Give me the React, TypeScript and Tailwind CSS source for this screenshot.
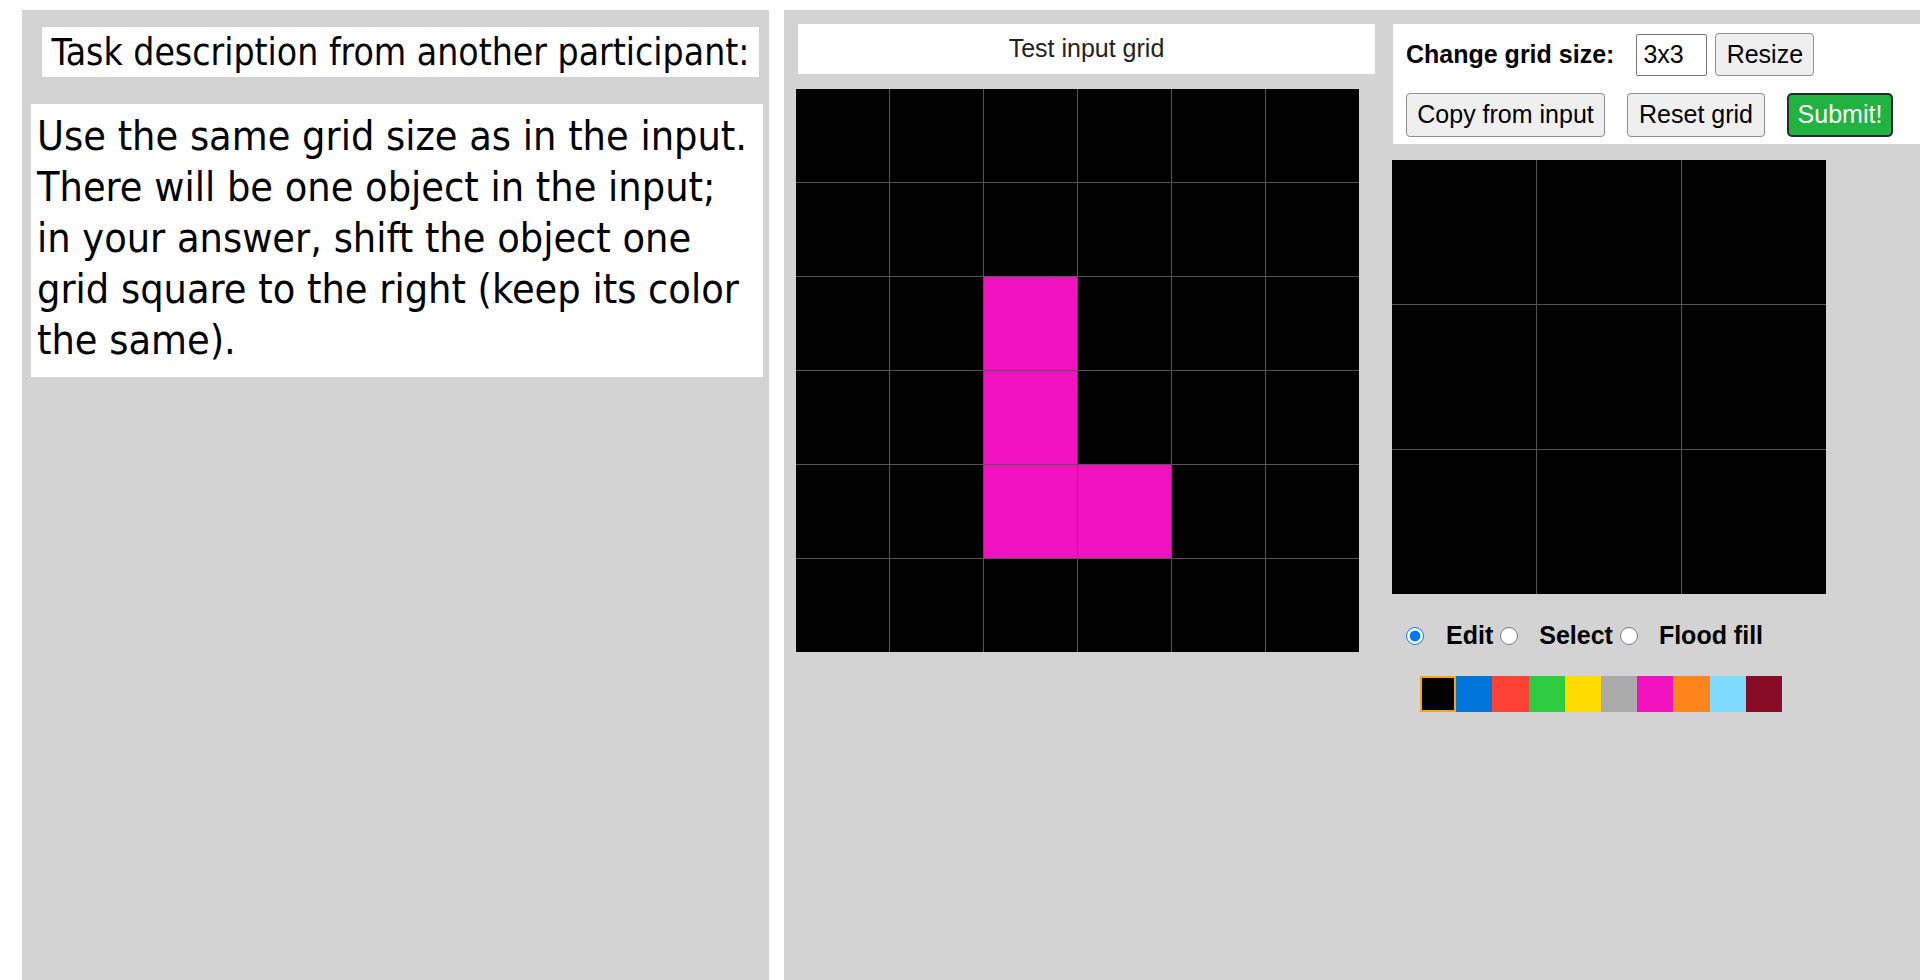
const inputGrid = [
  [0, 0, 0, 0, 0, 0],
  [0, 0, 0, 0, 0, 0],
  [0, 0, 6, 0, 0, 0],
  [0, 0, 6, 0, 0, 0],
  [0, 0, 6, 6, 0, 0],
  [0, 0, 0, 0, 0, 0],
];

const outputGrid = [
  [0, 0, 0],
  [0, 0, 0],
  [0, 0, 0],
];

const palette = [
  "bg-[#000000]",
  "bg-[#0074D9]",
  "bg-[#FF4136]",
  "bg-[#2ECC40]",
  "bg-[#FFDC00]",
  "bg-[#AAAAAA]",
  "bg-[#F012BE]",
  "bg-[#FF851B]",
  "bg-[#7FDBFF]",
  "bg-[#870C25]",
];

function Grid({ cells, size, cols }: { cells: number[][]; size: string; cols: string }) {
  return (
    <div className={`grid ${cols} gap-px bg-[#555555] w-fit`}>
      {cells.flat().map((c, i) => (
        <div key={i} className={`${size} ${palette[c]}`} />
      ))}
    </div>
  );
}

export default function App() {
  return (
    <div className="flex h-screen gap-[15px] bg-white pt-[10px] pl-[22px] font-['Liberation_Sans',Arial,sans-serif] text-black overflow-hidden">
      {/* left: task description */}
      <div className="w-[747px] shrink-0 bg-[#d3d3d3] pt-[17px]">
        <div className="ml-[20px] w-[717px] h-[50px] bg-white flex items-center justify-center text-[37px] font-['DejaVu_Sans_Condensed','Liberation_Sans',sans-serif] leading-none">
          Task description from another participant:
        </div>
        <div className="ml-[9px] mt-[27px] w-[732px] bg-white pl-[6px] pt-[7px] pb-[11px] text-[41px] leading-[51px] font-['DejaVu_Sans_Condensed','Liberation_Sans',sans-serif]">
          Use the same grid size as in the input.
          <br />
          There will be one object in the input;
          <br />
          in your answer, shift the object one
          <br />
          grid square to the right (keep its color
          <br />
          the same).
        </div>
      </div>

      {/* right: grids and controls */}
      <div className="flex-1 bg-[#d3d3d3] pt-[14px] pl-[12px] flex gap-[16px]">
        <div className="flex flex-col">
          <div className="ml-[2px] w-[577px] h-[50px] bg-white flex items-center justify-center text-[25px] text-[#222]">
            Test input grid
          </div>
          <div className="mt-[15px]">
            <Grid cells={inputGrid} cols="grid-cols-6" size="w-[93px] h-[93px]" />
          </div>
        </div>

        <div className="flex-1 flex flex-col">
          <div className="ml-[2px] h-[120px] bg-white pl-[13px] pt-[9px] text-[25px]">
            <div className="flex items-center h-[43px]">
              <span className="font-bold">Change grid size:</span>
              <input
                defaultValue="3x3"
                className="ml-[22px] w-[71px] h-[42px] border border-[#767676] rounded-[2px] px-[6px] text-[25px] outline-none"
              />
              <button className="ml-[8px] w-[99px] h-[43px] bg-[#efefef] border border-[#8f8f8f] rounded-[4px]">
                Resize
              </button>
            </div>
            <div className="flex items-center mt-[17px] gap-[22px]">
              <button className="w-[199px] h-[44px] bg-[#efefef] border border-[#8f8f8f] rounded-[4px]">
                Copy from input
              </button>
              <button className="w-[138px] h-[44px] bg-[#efefef] border border-[#8f8f8f] rounded-[4px]">
                Reset grid
              </button>
              <button className="w-[106px] h-[44px] bg-[#21b341] border-2 border-[#2a2a2a] rounded-[5px] text-white">
                Submit!
              </button>
            </div>
          </div>

          <div className="mt-[16px] ml-px">
            <Grid cells={outputGrid} cols="grid-cols-3" size="w-[144px] h-[144px]" />
          </div>

          <div className="mt-[28px] flex items-center h-[28px] text-[25px] font-bold">
            <input type="radio" name="mode" defaultChecked className="ml-[15px] w-[18px] h-[18px] accent-[#0075ff]" />
            <span className="ml-[22px]">Edit</span>
            <input type="radio" name="mode" className="ml-[7px] w-[18px] h-[18px]" />
            <span className="ml-[21px]">Select</span>
            <input type="radio" name="mode" className="ml-[7px] w-[18px] h-[18px]" />
            <span className="ml-[21px]">Flood fill</span>
          </div>

          <div className="mt-[26px] ml-[29px] flex">
            {palette.map((p, i) => (
              <div
                key={i}
                className={`w-[36.2px] h-[36px] ${p} ${i === 0 ? "border-2 border-[#FFA500]" : ""}`}
              />
            ))}
          </div>
        </div>
      </div>
    </div>
  );
}
